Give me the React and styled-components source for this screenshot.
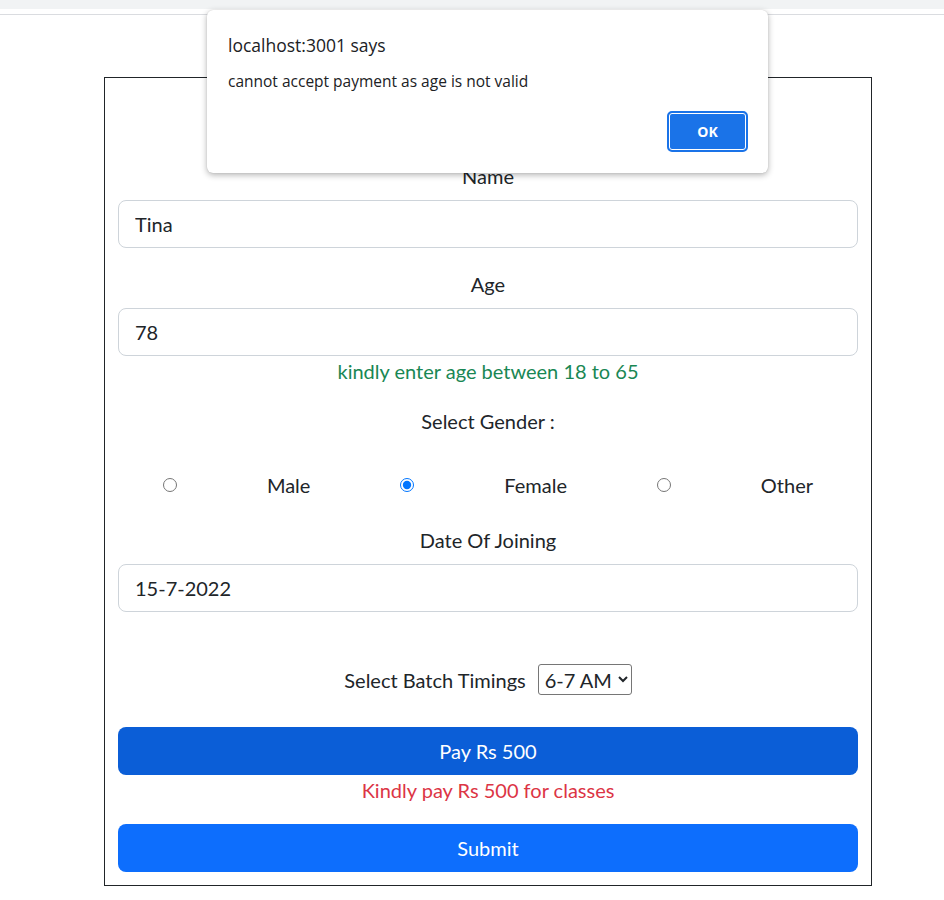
import React from "react";
import styled, { createGlobalStyle } from "styled-components";

const Global = createGlobalStyle`
  html, body { margin: 0; padding: 0; background: #fff; }
  body { font-family: Lato, "Noto Sans", sans-serif; color: #212529; }
  * { box-sizing: border-box; }
`;

const Page = styled.div`
  position: relative;
  width: 944px;
  min-height: 900px;
`;

const ChromeStrip = styled.div`
  height: 9px;
  background: #f1f3f4;
`;

const ChromeLine = styled.div`
  margin-top: 5px;
  border-top: 1px solid #dadce0;
`;

const Card = styled.form`
  margin: 62px 0 0 104px;
  width: 768px;
  border: 1px solid #212529;
  padding: 83px 13px 13px;
  display: flex;
  flex-direction: column;
`;

const Label = styled.label`
  display: block;
  text-align: center;
  font-size: 20px;
  line-height: 30px;
  margin-top: ${(p) => p.$mt || 0}px;
  margin-bottom: 9px;
`;

const Input = styled.input`
  display: block;
  width: 100%;
  height: 48px;
  padding: 8px 16px;
  font: inherit;
  font-size: 20px;
  color: #212529;
  border: 1px solid #ced4da;
  border-radius: 8px;
  outline: none;
`;

const Note = styled.div`
  text-align: center;
  font-size: 20px;
  line-height: 30px;
  color: ${(p) => p.$color};
  margin-top: ${(p) => p.$mt || 0}px;
`;

const RadioRow = styled.div`
  display: flex;
  justify-content: space-around;
  align-items: center;
  height: 30px;
  margin-top: 25px;
  font-size: 20px;
`;

const Radio = styled.input`
  margin: 0;
  width: 14px;
  height: 14px;
  accent-color: #0075ff;
`;

const RadioText = styled.span`
  font-size: 20px;
  line-height: 30px;
`;

const BatchRow = styled.div`
  display: flex;
  justify-content: center;
  align-items: center;
  gap: 12px;
  margin-top: 52px;
  font-size: 20px;
`;

const Select = styled.select`
  font: inherit;
  font-size: 20px;
  height: 31px;
  padding: 0 2px;
  border: 1px solid #767676;
  border-radius: 3px;
  background: #fff;
  color: #212529;
`;

const Button = styled.button`
  display: block;
  width: 100%;
  height: 48px;
  border: none;
  border-radius: 8px;
  background: ${(p) => p.$bg};
  color: #fff;
  font: inherit;
  font-size: 20px;
  margin-top: ${(p) => p.$mt || 0}px;
`;

const Dialog = styled.div`
  position: absolute;
  top: 10px;
  left: 207px;
  width: 561px;
  height: 163px;
  background: #fff;
  border-radius: 6px;
  box-shadow: 0 2px 6px rgba(0, 0, 0, 0.3), 0 0 1px rgba(0, 0, 0, 0.2);
  padding: 24px 20px 0 21px;
  display: flex;
  flex-direction: column;
  font-family: "Open Sans", sans-serif;
`;

const DialogTitle = styled.div`
  font-size: 17.5px;
  line-height: 22px;
  color: #202124;
`;

const DialogMessage = styled.div`
  font-size: 15.5px;
  line-height: 20px;
  color: #202124;
  margin-top: 15px;
`;

const DialogActions = styled.div`
  display: flex;
  justify-content: flex-end;
  margin-top: 20px;
`;

const OkButton = styled.button`
  width: 81px;
  height: 41px;
  border: 2px solid #1a73e8;
  border-radius: 5px;
  background: #1a73e8;
  box-shadow: inset 0 0 0 1px #fff;
  color: #fff;
  font-family: "Open Sans", sans-serif;
  font-weight: 700;
  font-size: 14px;
`;

export default function App() {
  return (
    <Page>
      <Global />
      <ChromeStrip />
      <ChromeLine />
      <Card onSubmit={(e) => e.preventDefault()}>
        <Label>Name</Label>
        <Input defaultValue="Tina" />
        <Label $mt={21}>Age</Label>
        <Input defaultValue="78" />
        <Note $color="#198754">kindly enter age between 18 to 65</Note>
        <Label $mt={20} as="div">Select Gender :</Label>
        <RadioRow>
          <Radio type="radio" name="g" />
          <RadioText>Male</RadioText>
          <Radio type="radio" name="g" defaultChecked />
          <RadioText>Female</RadioText>
          <Radio type="radio" name="g" />
          <RadioText>Other</RadioText>
        </RadioRow>
        <Label $mt={25}>Date Of Joining</Label>
        <Input defaultValue="15-7-2022" />
        <BatchRow>
          <span>Select Batch Timings</span>
          <Select defaultValue="6-7">
            <option value="6-7">6-7 AM</option>
            <option value="7-8">7-8 AM</option>
            <option value="8-9">8-9 AM</option>
            <option value="5-6">5-6 PM</option>
          </Select>
        </BatchRow>
        <Button type="button" $bg="#0b5ed7" $mt={32}>Pay Rs 500</Button>
        <Note $color="#dc3545">Kindly pay Rs 500 for classes</Note>
        <Button type="submit" $bg="#0d6efd" $mt={19}>Submit</Button>
      </Card>
      <Dialog>
        <DialogTitle>localhost:3001 says</DialogTitle>
        <DialogMessage>cannot accept payment as age is not valid</DialogMessage>
        <DialogActions>
          <OkButton type="button">OK</OkButton>
        </DialogActions>
      </Dialog>
    </Page>
  );
}
